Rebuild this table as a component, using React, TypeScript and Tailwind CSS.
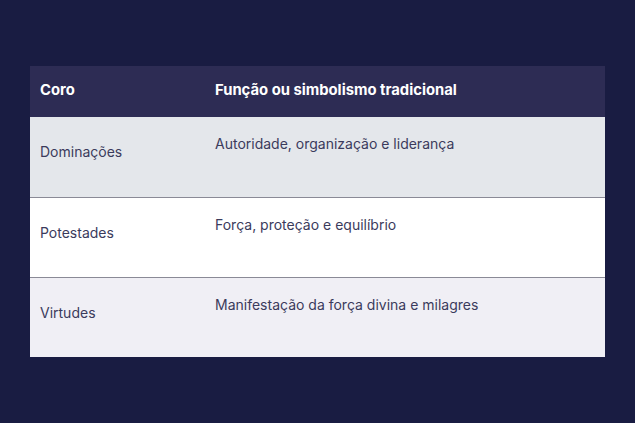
export default function App() {
  const rows = [
    { coro: 'Dominações', desc: 'Autoridade, organização e liderança', bg: 'bg-[#e4e7eb]' },
    { coro: 'Potestades', desc: 'Força, proteção e equilíbrio', bg: 'bg-white' },
    { coro: 'Virtudes', desc: 'Manifestação da força divina e milagres', bg: 'bg-[#f0eff5]' },
  ]

  return (
    <div
      className="w-[635px] h-[423px] bg-[#191c42] pt-[66px] pl-[30px]"
      style={{ fontFamily: 'Inter, "Noto Sans", sans-serif' }}
    >
      <div className="w-[575px]">
        <div className="h-[51px] bg-[#2d2c54] flex items-center pb-[3px] text-white font-bold text-[14.8px]">
          <div className="w-[175px] pl-[10px]">Coro</div>
          <div className="flex-1 pl-[10px]">Função ou simbolismo tradicional</div>
        </div>
        {rows.map((r, i) => (
          <div
            key={i}
            className={`h-[80px] flex text-[14px] text-[#3b3b5c] ${r.bg} ${i > 0 ? 'border-t border-[#8a8a96]' : ''}`}
          >
            <div className="w-[175px] pl-[10px] pt-[24px]">{r.coro}</div>
            <div className="flex-1 pl-[10px] pt-[16px]">{r.desc}</div>
          </div>
        ))}
      </div>
    </div>
  )
}
